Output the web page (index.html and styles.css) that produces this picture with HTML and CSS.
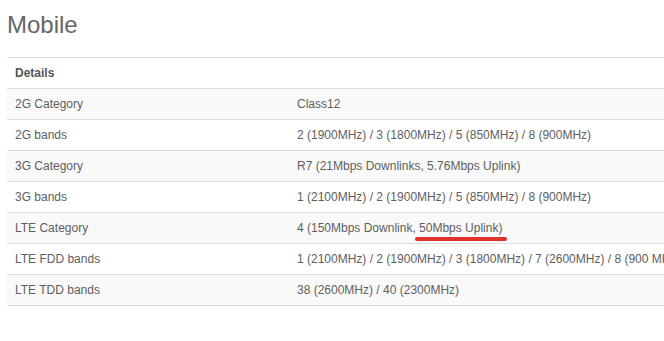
FILE: index.html
```html
<!DOCTYPE html>
<html lang="en">
<head>
<meta charset="utf-8">
<title>Mobile</title>
<link rel="stylesheet" href="styles.css">
</head>
<body>
<section class="specs">
  <h1 class="specs-title">Mobile</h1>
  <div class="table-wrap">
    <table class="spec-table">
      <thead>
        <tr><th class="col-name">Details</th><th></th></tr>
      </thead>
      <tbody>
        <tr><td>2G Category</td><td>Class12</td></tr>
        <tr><td>2G bands</td><td>2 (1900MHz) / 3 (1800MHz) / 5 (850MHz) / 8 (900MHz)</td></tr>
        <tr><td>3G Category</td><td>R7 (21Mbps Downlinks, 5.76Mbps Uplink)</td></tr>
        <tr><td>3G bands</td><td>1 (2100MHz) / 2 (1900MHz) / 5 (850MHz) / 8 (900MHz)</td></tr>
        <tr><td>LTE Category</td><td>4 (150Mbps Downlink, <span class="marked">50Mbps Uplink)</span></td></tr>
        <tr><td>LTE FDD bands</td><td>1 (2100MHz) / 2 (1900MHz) / 3 (1800MHz) / 7 (2600MHz) / 8 (900 MHz)</td></tr>
        <tr><td>LTE TDD bands</td><td>38 (2600MHz) / 40 (2300MHz)</td></tr>
      </tbody>
    </table>
  </div>
</section>
</body>
</html>
```
FILE: styles.css
```css
html, body {
  margin: 0;
  padding: 0;
  background: #fff;
  overflow: hidden;
}

body {
  font-family: "Liberation Sans", Arial, sans-serif;
  color: #555;
}

.specs {
  padding: 12px 0 0 7px;
}

.specs-title {
  margin: 0 0 19px;
  font-size: 24px;
  line-height: 26px;
  font-weight: normal;
  color: #666;
}

.table-wrap {
  overflow: hidden;
}

.spec-table {
  border-collapse: collapse;
  width: 760px;
  font-size: 12px;
  line-height: 14px;
}

.spec-table th,
.spec-table td {
  padding: 8px;
  text-align: left;
  vertical-align: top;
  border-top: 1px solid #ddd;
  white-space: nowrap;
}

.spec-table th {
  font-weight: bold;
  color: #555;
}

.spec-table .col-name {
  width: 282px;
  box-sizing: border-box;
}

.spec-table td {
  color: #5e5e5e;
}

.spec-table tbody tr:nth-child(odd) {
  background: #f9f9f9;
}

.spec-table tbody tr:last-child td {
  border-bottom: 1px solid #ddd;
}

.marked {
  position: relative;
  display: inline-block;
}

.marked::after {
  content: "";
  position: absolute;
  left: -4px;
  right: -5px;
  top: 16px;
  height: 4px;
  border-radius: 2px;
  background: #e0312b;
}
```
